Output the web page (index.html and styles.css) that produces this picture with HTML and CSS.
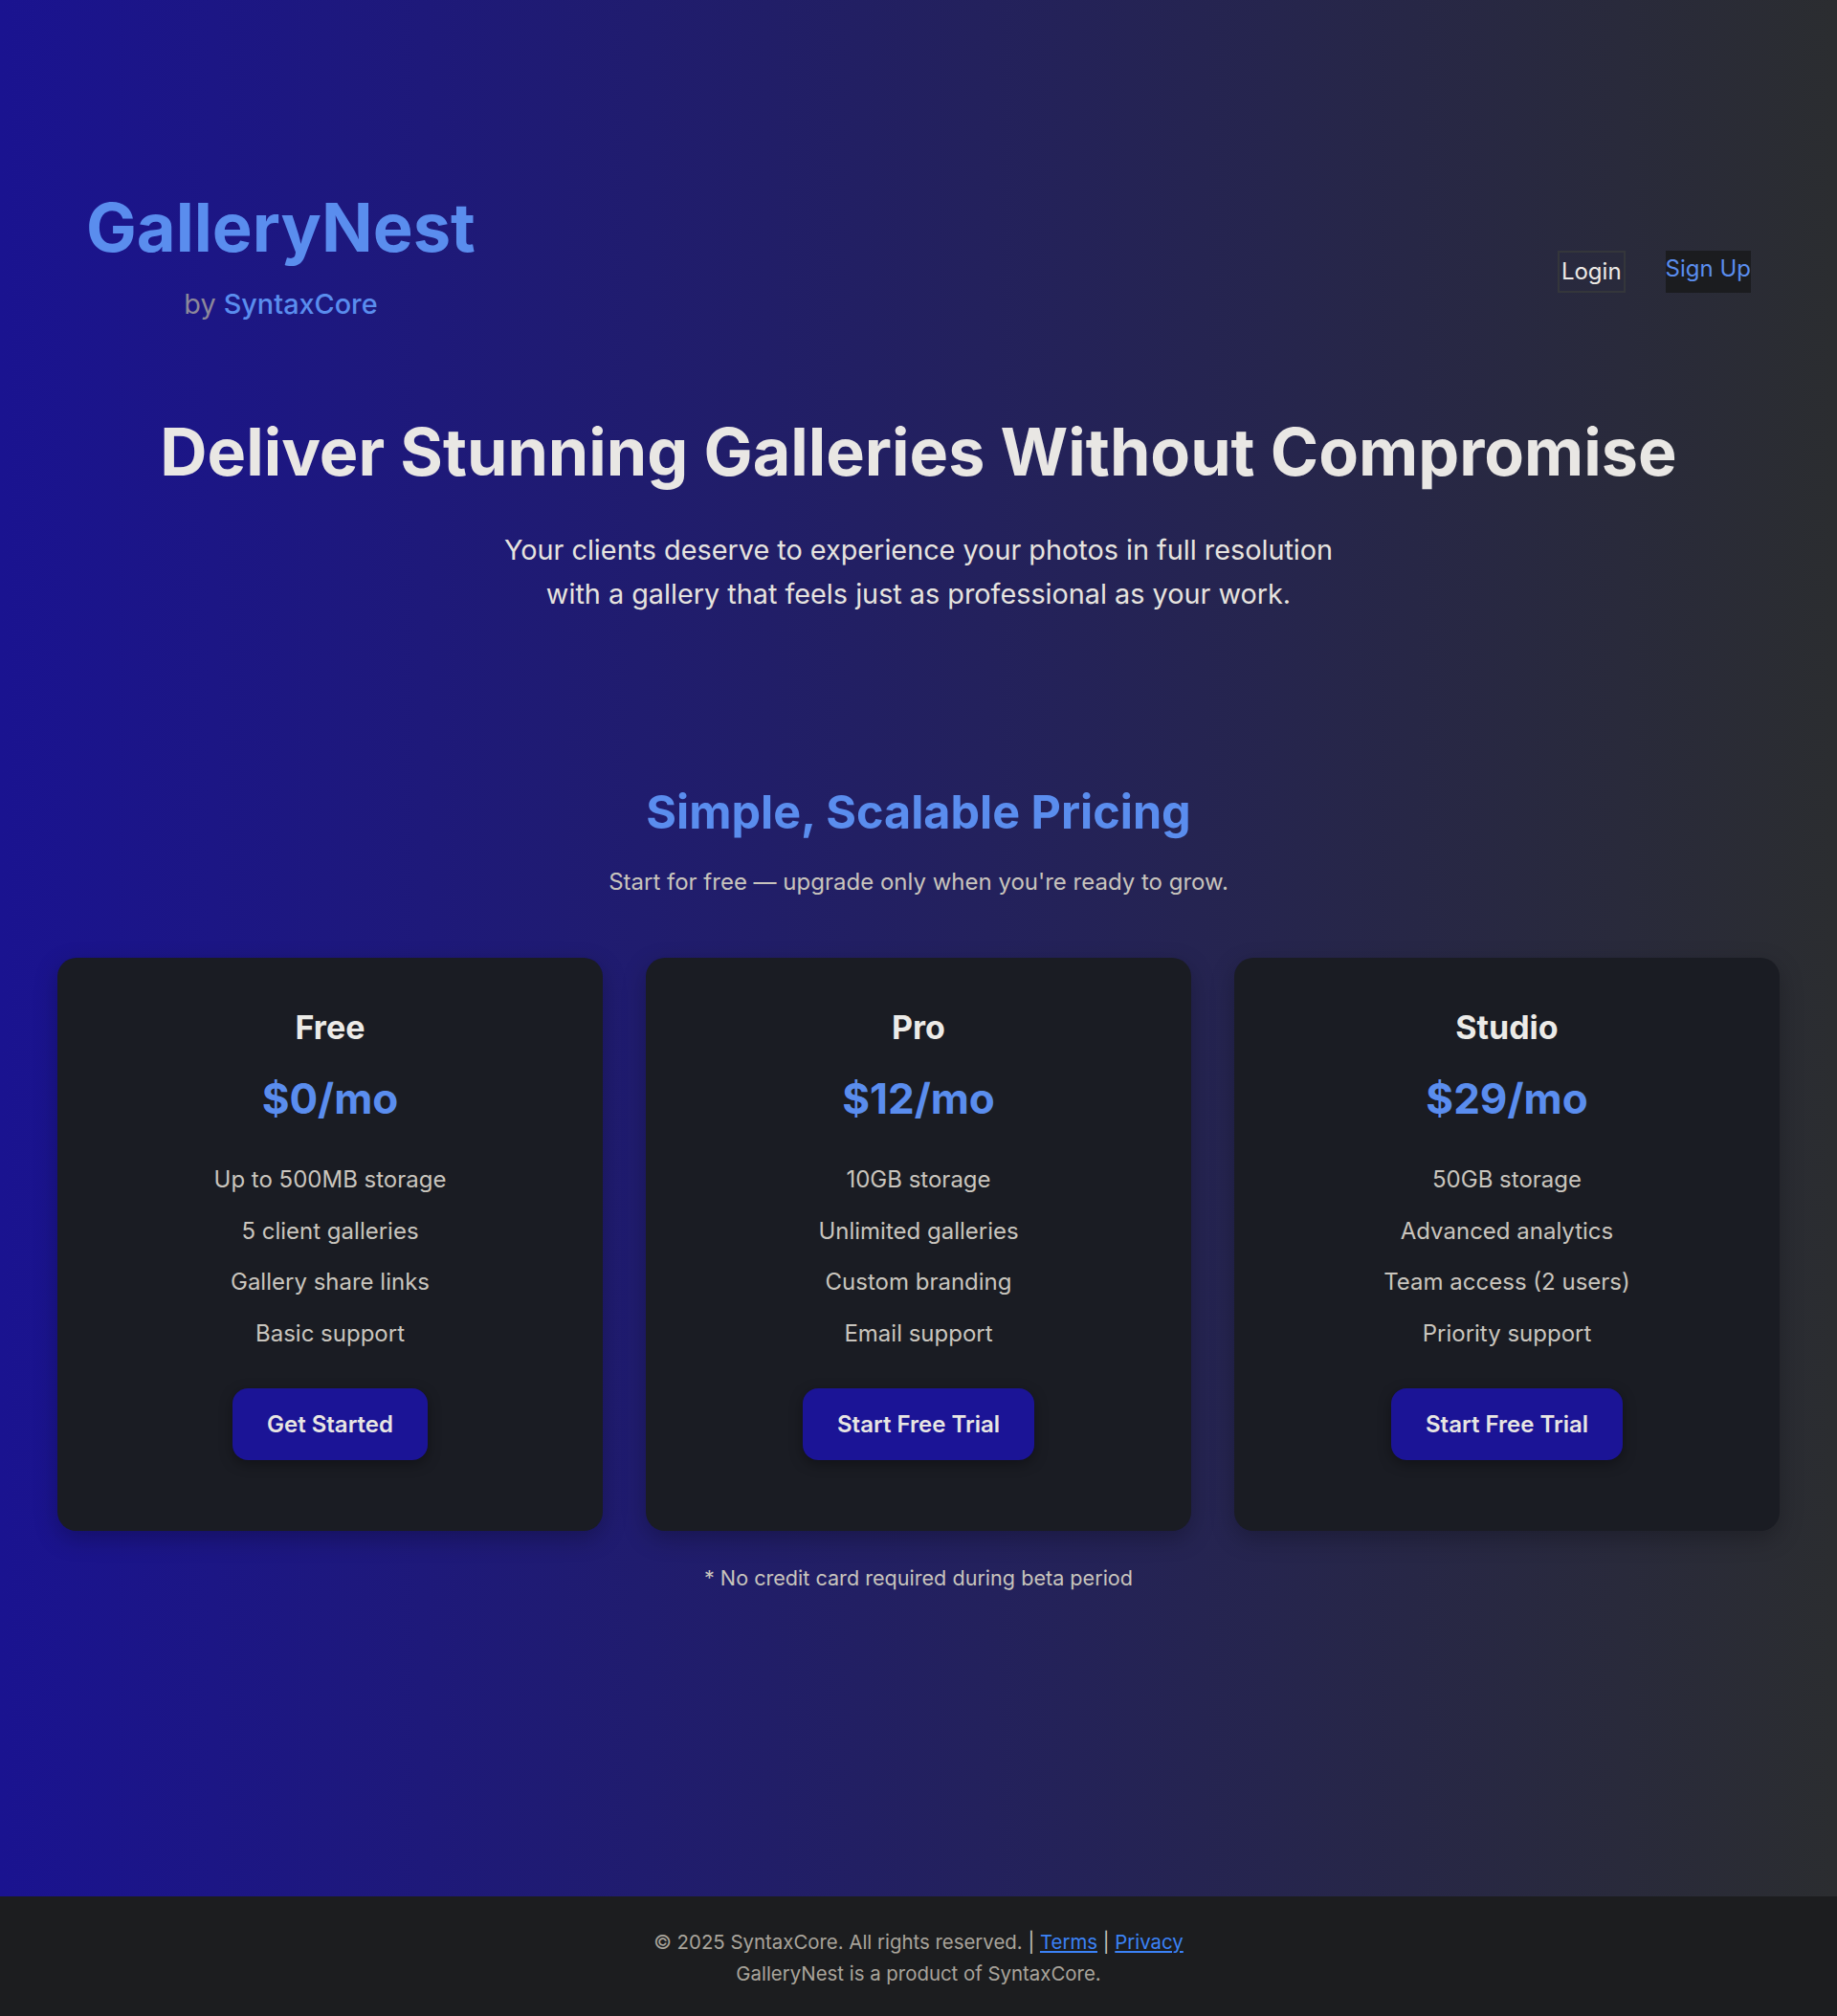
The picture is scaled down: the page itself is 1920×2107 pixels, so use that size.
FILE: index.html
```html
<!DOCTYPE html>
<html lang="en">
<head>
<meta charset="utf-8">
<title>GalleryNest by SyntaxCore</title>
<link rel="stylesheet" href="styles.css">
</head>
<body>
<main class="main">
  <header class="header">
    <div class="brand">
      <h1 class="brand-name">GalleryNest</h1>
      <p class="brand-by">by <span class="brand-by-name">SyntaxCore</span></p>
    </div>
    <nav class="nav">
      <button class="btn-login" type="button">Login</button>
      <a class="link-signup" href="#">Sign Up</a>
    </nav>
  </header>

  <section class="hero">
    <h2 class="hero-title">Deliver Stunning Galleries Without Compromise</h2>
    <p class="hero-text">Your clients deserve to experience your photos in full resolution with a gallery that feels just as professional as your work.</p>
  </section>

  <section class="pricing">
    <h2 class="pricing-title">Simple, Scalable Pricing</h2>
    <p class="pricing-sub">Start for free — upgrade only when you're ready to grow.</p>

    <div class="cards">
      <div class="card">
        <h3 class="card-title">Free</h3>
        <div class="card-price">$0/mo</div>
        <ul class="card-features">
          <li>Up to 500MB storage</li>
          <li>5 client galleries</li>
          <li>Gallery share links</li>
          <li>Basic support</li>
        </ul>
        <a class="card-btn" href="#">Get Started</a>
      </div>
      <div class="card">
        <h3 class="card-title">Pro</h3>
        <div class="card-price">$12/mo</div>
        <ul class="card-features">
          <li>10GB storage</li>
          <li>Unlimited galleries</li>
          <li>Custom branding</li>
          <li>Email support</li>
        </ul>
        <a class="card-btn" href="#">Start Free Trial</a>
      </div>
      <div class="card">
        <h3 class="card-title">Studio</h3>
        <div class="card-price">$29/mo</div>
        <ul class="card-features">
          <li>50GB storage</li>
          <li>Advanced analytics</li>
          <li>Team access (2 users)</li>
          <li>Priority support</li>
        </ul>
        <a class="card-btn" href="#">Start Free Trial</a>
      </div>
    </div>

    <p class="pricing-note">* No credit card required during beta period</p>
  </section>
</main>

<footer class="footer">
  <p class="footer-line">© 2025 SyntaxCore. All rights reserved. <span class="footer-sep">|</span> <a class="footer-link" href="#">Terms</a> <span class="footer-sep">|</span> <a class="footer-link" href="#">Privacy</a></p>
  <p class="footer-line">GalleryNest is a product of SyntaxCore.</p>
</footer>
</body>
</html>
```

FILE: styles.css
```css
html, body {
  margin: 0;
  padding: 0;
}

body {
  font-family: Inter, "Noto Sans", "Liberation Sans", sans-serif;
  background: linear-gradient(to right, #1a1390, #2b2d30);
  color: #ebe9e6;
  min-height: 100vh;
  display: flex;
  flex-direction: column;
}

.main {
  flex: 1;
}

/* Header */
.header {
  display: flex;
  justify-content: space-between;
  align-items: flex-start;
  padding: 195px 90px 0;
}

.brand {
  text-align: center;
}

.brand-name {
  margin: 0;
  font-size: 70.4px;
  font-weight: 700;
  line-height: normal;
  color: #5a8dee;
}

.brand-by {
  margin: 20px 0 0;
  font-size: 28.8px;
  line-height: normal;
  color: #8c889a;
}

.brand-by-name {
  color: #5a8dee;
  font-weight: 500;
}

.nav {
  display: flex;
  gap: 42px;
  margin-top: 67px;
}

.btn-login {
  font-family: inherit;
  font-size: 24px;
  line-height: 1.6;
  color: #eeeae6;
  background: transparent;
  border: 2px solid #34363b;
  padding: 1px 2px;
  margin: 0;
}

.link-signup {
  font-size: 24px;
  line-height: 1.6;
  color: #5a8dee;
  background: #1b1c1f;
  text-decoration: none;
}

/* Hero */
.hero {
  text-align: center;
  margin-top: 96px;
}

.hero-title {
  margin: 0;
  font-size: 68.2px;
  font-weight: 700;
  line-height: normal;
  color: #e9e7e4;
}

.hero-text {
  margin: 39px auto 0;
  max-width: 900px;
  font-size: 28.8px;
  line-height: 1.6;
  color: #e6e3df;
}

/* Pricing */
.pricing {
  text-align: center;
}

.pricing-title {
  margin: 175px 0 0;
  font-size: 48.5px;
  font-weight: 700;
  line-height: normal;
  color: #5a8dee;
}

.pricing-sub {
  margin: 29px 0 0;
  font-size: 24px;
  line-height: normal;
  color: #c8c4bd;
}

.cards {
  display: grid;
  grid-template-columns: repeat(3, 1fr);
  gap: 45px;
  padding: 0 60px;
  margin-top: 65px;
}

.card {
  background: #1a1c23;
  border-radius: 20px;
  padding: 52px 40px 74px;
  text-align: center;
  box-shadow: 0 8px 24px rgba(0, 0, 0, 0.25);
}

.card-title {
  margin: 0;
  font-size: 34px;
  font-weight: 700;
  line-height: normal;
  color: #ecebe8;
}

.card-price {
  margin-top: 27px;
  font-size: 44px;
  font-weight: 700;
  line-height: normal;
  color: #5a8dee;
}

.card-features {
  list-style: none;
  margin: 31px 0 0;
  padding: 0;
}

.card-features li {
  font-size: 24px;
  line-height: 35.5px;
  padding: 9px 0;
  color: #c9c5be;
}

.card-btn {
  display: inline-block;
  margin-top: 31px;
  padding: 23px 36px;
  font-size: 24px;
  font-weight: 600;
  line-height: 29px;
  color: #e8e6e3;
  background: #1b1496;
  border-radius: 16px;
  text-decoration: none;
  box-shadow: 0 4px 14px rgba(0, 0, 0, 0.35);
}

.pricing-note {
  margin: 36px 0 0;
  font-size: 21.6px;
  line-height: normal;
  color: #c8c4bd;
}

/* Footer */
.footer {
  background: #1c1d1f;
  text-align: center;
  padding: 31px 0 28px;
  font-size: 20.4px;
  line-height: 33px;
  color: #a9a49b;
}

.footer-line {
  margin: 0;
}

.footer-sep {
  color: #c8c4bd;
}

.footer-link {
  color: #3b82f6;
}
```
